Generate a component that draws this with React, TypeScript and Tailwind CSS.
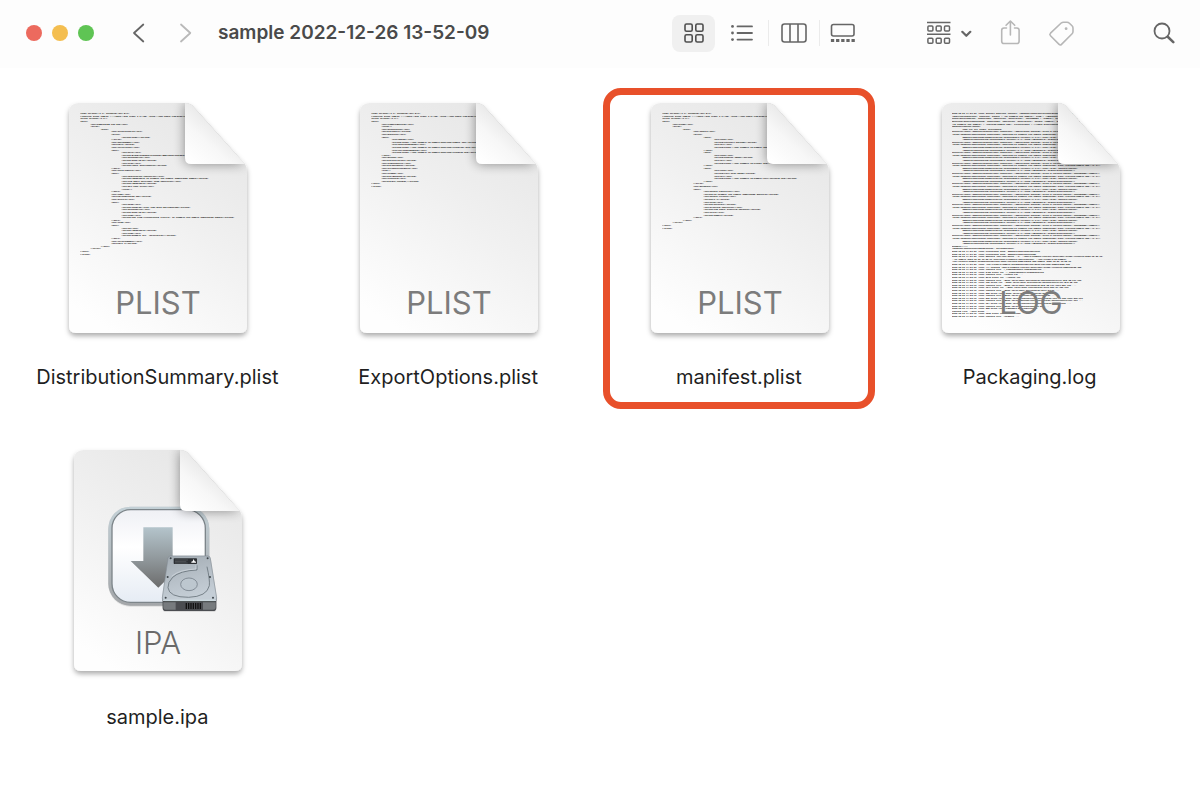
import { useId } from 'react';
import type { ReactNode } from 'react';

type FileItem = {
  name: string;
  kind: string;
  preview?: string;
  highlighted?: boolean;
};

const plistHead = `<?xml version="1.0" encoding="UTF-8"?>
<!DOCTYPE plist PUBLIC "-//Apple//DTD PLIST 1.0//EN" "http://www.apple.com/DTDs/PropertyList-1.0.dtd">
<plist version="1.0">
<dict>`;

const distributionSummary = `${plistHead}
	<key>sample2022.ipa.zip</key>
	<array>
		<dict>
			<key>architectures</key>
			<array>
				<string>arm64</string>
			</array>
			<key>buildNumber</key>
			<string>1</string>
			<key>certificate</key>
			<dict>
				<key>SHA1</key>
				<string>B43C8A0F2D5E6A7190CE12F4B8D79E03A1C6F5D2</string>
				<key>dateExpires</key>
				<string>2023/12/20</string>
				<key>type</key>
				<string>Apple Distribution</string>
			</dict>
			<key>entitlements</key>
			<dict>
				<key>application-identifier</key>
				<string>ABCDE12345.jp.example.ios.sample.sample2022.sample</string>
				<key>com.apple.developer.team-identifier</key>
				<string>ABCDE12345</string>
				<key>get-task-allow</key>
				<false/>
			</dict>
			<key>name</key>
			<string>sample2022.app</string>
			<key>profile</key>
			<dict>
				<key>UUID</key>
				<string>a1b2c3d4-9f61-4a5e-8c3b-d6e7f8091a2b</string>
				<key>dateExpires</key>
				<string>2023/12/20</string>
				<key>name</key>
				<string>iOS Team Provisioning Profile: jp.example.ios.sample.sample2022.sample</string>
			</dict>
			<key>team</key>
			<dict>
				<key>id</key>
				<string>ABCDE12345</string>
				<key>name</key>
				<string>Example Inc. (Enterprise)</string>
			</dict>
			<key>versionNumber</key>
			<string>1.0</string>
		</dict>
	</array>
</dict>
</plist>`;

const exportOptions = `${plistHead}
	<key>compileBitcode</key>
	<false/>
	<key>destination</key>
	<string>export</string>
	<key>manifest</key>
	<dict>
		<key>appURL</key>
		<string>https://www.example.jp/sample/download/sample.ipa</string>
		<key>displayImageURL</key>
		<string>https://www.example.jp/sample/download/icon57x57.png</string>
		<key>fullSizeImageURL</key>
		<string>https://www.example.jp/sample/download/icon512x.png</string>
	</dict>
	<key>method</key>
	<string>enterprise</string>
	<key>signingStyle</key>
	<string>automatic</string>
	<key>stripSwiftSymbols</key>
	<true/>
	<key>teamID</key>
	<string>ABCDE12345</string>
	<key>thinning</key>
	<string>&lt;none&gt;</string>
</dict>
</plist>`;

const manifest = `${plistHead}
	<key>items</key>
	<array>
		<dict>
			<key>assets</key>
			<array>
				<dict>
					<key>kind</key>
					<string>software-package</string>
					<key>url</key>
					<string>https://www.example.jp/sample.ipa</string>
				</dict>
				<dict>
					<key>kind</key>
					<string>display-image</string>
					<key>url</key>
					<string>https://www.example.jp/icon57.png</string>
				</dict>
				<dict>
					<key>kind</key>
					<string>full-size-image</string>
					<key>url</key>
					<string>https://www.example.jp/sample/full/fullsize.png</string>
				</dict>
			</array>
			<key>metadata</key>
			<dict>
				<key>bundle-identifier</key>
				<string>jp.example.ios.sample.sample2022.manifest</string>
				<key>bundle-version</key>
				<string>1.0</string>
				<key>kind</key>
				<string>software</string>
				<key>platform-identifier</key>
				<string>com.apple.platform.iphoneos</string>
				<key>title</key>
				<string>sample</string>
			</dict>
		</dict>
	</array>
</dict>
</plist>`;

const logAsset = `InstallerAsset("IDEDistributionAsset:0x600001a","application-package",scale:2,variant"iphone",customName="sample")
"Item("IDEDistributionItem:0x600003b1",bundleId"jp.example.ios.sample.sample2022",path:"Payload/sample.app",(1.0)),
	IDEDistributionMethodEnterprise:0x600002b840,version="1.0(1)",size="8432",options"0x6000"
	(IDEDistributionItem:0x600002b840,version="1.0",team="ABCDE12345",signed"Distribution")`;

const packagingLog = `2022-12-26 04:51:59 +0000  Initial pipeline context: <IDEDistributionProcessingPipelineContext: 0x7fb>
(IDEArchivedContent: 0x600001, bundle = "jp.example.ios.sample", team = "ABCDE12345", options = {})
Chain(Distribution: 0x600003b1, identifier "Enterprise", customName = "sample", platform: "iphoneos")
Resolved(DistributionItem: 0x600003b1, identifier "Enterprise", bundle "sample", path: "Payload/sample")
"jp.example.ios.sample" = "Payload/sample.app", certificates = ("Apple Distribution: Example Inc.")
IDEDistribution(Steps)
	Task for all items: processing
${Array.from({ length: 11 }, () => logAsset).join('\n')}
Example"("")
<IDEDistributionPackagingContext: 0x7fb63091600>
2022-12-26 04:51:59 +0000  Processing step: IDEDistributionStepCreate
2022-12-26 04:51:59 +0000  Processing step: IDEDistributionPackage
2022-12-26 04:51:59 +0000  Running /usr/bin/ditto '-V' '/Users/example/Library/Developer/Xcode/Archives/2022-12-26 13'
'-xk sample 2022-12-26 13-52-09.xcarchive/Products/Applications' '/var/folders/zz/sample'
/var/folders/sample/XcodeDistPipeline/Root/Payload/sample2022.app/sample 2022-12-26 13-52-09
2022-12-26 04:51:59 +0000  /var/folders/sample/XcodeDistPipeline/Root/Payload/sample2022.app
2022-12-26 04:51:59 +0000  >>> Copying /Users/example/Library/Developer/Xcode/Archives/sample2022.app
2022-12-26 04:52:01 +0000  copying file ./_CodeSignature/CodeResources ...
2022-12-26 04:52:01 +0000  5422 bytes for ./_CodeSignature/CodeResources
2022-12-26 04:52:01 +0000  copying file ./Assets.car ...
2022-12-26 04:52:01 +0000  8942 bytes for ./Assets.car
2022-12-26 04:52:01 +0000  copying file ./Base.lproj/Main.storyboardc/UIViewController-BYZ-38-t0r.nib
2022-12-26 04:52:01 +0000  932 bytes for ./Base.lproj/Main.storyboardc/UIViewController-BYZ-38.nib
2022-12-26 04:52:01 +0000  copying file ./Base.lproj/Main.storyboardc/BYZ-38-t0r-view-8bC.nib ...
2022-12-26 04:52:01 +0000  1247 bytes for ./Base.lproj/Main.storyboardc/Info-8bC-Xf-vdC.nib
2022-12-26 04:52:01 +0000  copying file ./Base.lproj/Main.storyboardc/Info.plist ...
2022-12-26 04:52:01 +0000  258 bytes for ./Base.lproj/Main.storyboardc/Info.plist
2022-12-26 04:52:01 +0000  copying file ./Base.lproj/LaunchScreen.storyboardc ...
2022-12-26 04:52:01 +0000  832 bytes for ./Base.lproj/LaunchScreen.storyboardc/01J-lp-oVM-view-Ze5.nib
2022-12-26 04:52:01 +0000  copying file ./Base.lproj/LaunchScreen.storyboardc/UIViewController-01J ...
2022-12-26 04:52:01 +0000  924 bytes for ./Base.lproj/LaunchScreen.storyboardc/Info.plist ...
2022-12-26 04:52:01 +0000  copying file ./Base.lproj/AppIcon60x60@2x.png ...
2022-12-26 04:52:01 +0000  258 bytes for ./embedded.mobileprovision
copying file ./Info.plist ...
2022-12-26 04:52:01 +0000  1532 bytes for ./Info.plist
2022-12-26 04:52:01 +0000  copying file ./PkgInfo ...`;

const files: FileItem[] = [
  { name: 'DistributionSummary.plist', kind: 'PLIST', preview: distributionSummary },
  { name: 'ExportOptions.plist', kind: 'PLIST', preview: exportOptions },
  { name: 'manifest.plist', kind: 'PLIST', preview: manifest, highlighted: true },
  { name: 'Packaging.log', kind: 'LOG', preview: packagingLog },
  { name: 'sample.ipa', kind: 'IPA' },
];

type PageProps = {
  x: number;
  y: number;
  width: number;
  height: number;
  children: ReactNode;
};

// Sheet of paper with the top right corner folded over its content
function Page({ x, y, width, height, children }: PageProps) {
  const id = useId();
  const right = x + width;
  const bottom = y + height;
  const fx = right - 62;
  const fy = y + 61;
  const sheet = `M${x + 10} ${y}H${fx}q4 0 7 2L${right - 2} ${fy}q2 3 2 7V${bottom - 7}q0 7-7 7H${x + 7}q-7 0-7-7V${y + 10}q0-10 10-10z`;
  const fold = `M${fx} ${y}V${fy - 6}q0 6 6 6H${right - 2}L${fx + 7} ${y + 2}q-3-2-7-2z`;
  return (
    <>
      <defs>
        <linearGradient id={`${id}-sheet`} x1="0.75" y1="0" x2="0.25" y2="1">
          <stop offset="0" stopColor="#e6e6e6" />
          <stop offset="0.45" stopColor="#f0f0f0" />
          <stop offset="0.8" stopColor="#f9f9f9" />
          <stop offset="1" stopColor="#fefefe" />
        </linearGradient>
        <linearGradient id={`${id}-fold`} gradientUnits="userSpaceOnUse" x1={fx + 34} y1={y + 27} x2={fx + 6} y2={fy - 2}>
          <stop offset="0" stopColor="#ebebeb" />
          <stop offset="0.4" stopColor="#f7f7f7" />
          <stop offset="1" stopColor="#ffffff" />
        </linearGradient>
        <clipPath id={`${id}-clip`}>
          <path d={sheet} />
        </clipPath>
        <filter id={`${id}-drop`} x="-10%" y="-10%" width="120%" height="120%">
          <feDropShadow dx="0" dy="3" stdDeviation="2.5" floodOpacity="0.32" />
        </filter>
        <filter id={`${id}-blur`} x="-50%" y="-50%" width="200%" height="200%">
          <feGaussianBlur stdDeviation="6" />
        </filter>
      </defs>
      <path d={sheet} fill={`url(#${id}-sheet)`} filter={`url(#${id}-drop)`} />
      <g clipPath={`url(#${id}-clip)`}>
        {children}
        <path d={fold} fill="#000" opacity="0.42" filter={`url(#${id}-blur)`} />
      </g>
      <path d={fold} fill={`url(#${id}-fold)`} />
    </>
  );
}

function TextPreview({ x, y, text }: { x: number; y: number; text: string }) {
  return (
    <svg x={x} y={y} width="156" height="221" viewBox="0 0 720 1020" aria-hidden="true">
      <g fontFamily="'Liberation Mono', monospace" fontSize="10" fontWeight="700" fill="#000">
        {text.split('\n').map((line, i) => {
          const indent = line.length - line.trimStart().length;
          return (
            <text key={i} x={indent * 48} y={10 + i * 12}>
              {line.trimStart()}
            </text>
          );
        })}
      </g>
    </svg>
  );
}

function KindLabel({ kind, thin }: { kind: string; thin?: boolean }) {
  return (
    <text
      x="111"
      y="219"
      textAnchor="middle"
      fontFamily="Inter, sans-serif"
      fontSize="31"
      fontWeight={thin ? 300 : 400}
      fill={thin ? '#6a6a6a' : '#7c7c7c'}
    >
      {kind}
    </text>
  );
}

function InstallerArt() {
  const id = useId();
  return (
    <g transform="translate(48 60) scale(0.3333)">
      <defs>
        <linearGradient id={`${id}-rim`} x1="0" y1="0" x2="0" y2="1">
          <stop offset="0" stopColor="#c3d0d6" />
          <stop offset="1" stopColor="#a3a6a9" />
        </linearGradient>
        <linearGradient id={`${id}-face`} x1="0" y1="0" x2="0" y2="1">
          <stop offset="0" stopColor="#eff0f5" />
          <stop offset="0.4" stopColor="#ffffff" />
          <stop offset="1" stopColor="#e6ecf4" />
        </linearGradient>
        <linearGradient id={`${id}-arrow`} x1="0" y1="0" x2="0" y2="1">
          <stop offset="0" stopColor="#b4c4cb" />
          <stop offset="0.5" stopColor="#929a9e" />
          <stop offset="1" stopColor="#6c6c6c" />
        </linearGradient>
        <linearGradient id={`${id}-disk`} x1="0" y1="0" x2="0.3" y2="1">
          <stop offset="0" stopColor="#a2abb2" />
          <stop offset="0.6" stopColor="#b8c1c9" />
          <stop offset="1" stopColor="#c5ced6" />
        </linearGradient>
        <filter id={`${id}-soft`}>
          <feDropShadow dx="0" dy="1" stdDeviation="1" floodOpacity="0.3" />
        </filter>
      </defs>
      <rect x="40" y="35" width="303" height="297" rx="66" fill={`url(#${id}-rim)`} filter={`url(#${id}-soft)`} />
      <rect x="51" y="44" width="280" height="278" rx="56" fill={`url(#${id}-face)`} stroke="#7d858a" strokeWidth="4" />
      <path d="M145 97h88v101h38l-81 80-83-80h38z" fill={`url(#${id}-arrow)`} />
      <g filter={`url(#${id}-soft)`}>
        <path d="M203 308h161v30q0 10-10 10H213q-10 0-10-10z" fill="#4b4e51" />
        <path d="M227 183h111q7 0 8 7l19 119q1 8-7 8H210q-9 0-8-8l17-119q1-7 8-7z" fill={`url(#${id}-disk)`} stroke="#8b949b" strokeWidth="2" />
      </g>
      <path d="M205 322h37v22h-29q-8 0-8-8zM324 322h38v14q0 8-8 8h-30z" fill="#777b7e" />
      <path d="M274 324v18M281 324v18M288 324v18M295 324v18M302 324v18M309 324v18M316 324v18" stroke="#111" strokeWidth="4" />
      <path d="M204 316h159" stroke="#dbe8ee" strokeWidth="3" />
      <rect x="236" y="190" width="70" height="17" rx="2" fill="#2d3034" />
      <path d="M240 195h39M240 200h34M240 204h38" stroke="#717579" strokeWidth="1.5" />
      <path d="M289 203h14v-3l-4-1-3-7-3 7-4 1z" fill="#fff" />
      <path
        d="M306 211v14q-51 2-73 22-15 15-14 31 3 29 62 29 55-2 62-35 2-18-7-57"
        fill="none"
        stroke="#68727a"
        strokeWidth="2.500"
      />
      <path d="M303 211v11q-51 2-73 22" fill="none" stroke="#d6dde2" strokeWidth="2" />
      <ellipse cx="282" cy="268" rx="25" ry="19" fill="#bdc7cf" stroke="#77818a" strokeWidth="2.500" />
      <g fill="#3d4449">
        <circle cx="227" cy="190" r="3" />
        <circle cx="338" cy="190" r="3" />
        <circle cx="218" cy="246" r="3" />
        <circle cx="345" cy="246" r="3" />
        <circle cx="212" cy="308" r="3" />
        <circle cx="354" cy="308" r="3" />
      </g>
    </g>
  );
}

function FileIcon({ file }: { file: FileItem }) {
  return (
    <svg width="220" height="252" viewBox="0 0 220 252" className="shrink-0">
      {file.preview ? (
        <Page x={22} y={8} width={178} height={230}>
          <TextPreview x={file.kind === 'LOG' ? 32 : 33} y={17} text={file.preview} />
          <KindLabel kind={file.kind} />
        </Page>
      ) : (
        <Page x={27} y={15} width={168} height={221}>
          <InstallerArt />
          <KindLabel kind={file.kind} thin />
        </Page>
      )}
    </svg>
  );
}

function Toolbar() {
  return (
    <header className="flex h-17 items-center bg-[#fdfdfd] pr-[25px] pb-[2px] pl-[26px] text-[#666]">
      <div className="flex gap-[10px]">
        <button type="button" aria-label="Close" className="size-4 rounded-full bg-[#ec6a5e]" />
        <button type="button" aria-label="Minimize" className="size-4 rounded-full bg-[#f4be50]" />
        <button type="button" aria-label="Zoom" className="size-4 rounded-full bg-[#5fc454]" />
      </div>
      <div className="ml-9 flex gap-6">
        <button type="button" aria-label="Back">
          <svg width="22" height="22" viewBox="0 0 22 22" fill="none" stroke="currentColor" strokeWidth="1.8" strokeLinecap="round" strokeLinejoin="round">
            <path d="M13.300 2.500 4 11l9.300 8.500" />
          </svg>
        </button>
        <button type="button" aria-label="Forward" className="text-[#b9b9b9]">
          <svg width="22" height="22" viewBox="0 0 22 22" fill="none" stroke="currentColor" strokeWidth="1.8" strokeLinecap="round" strokeLinejoin="round">
            <path d="M5 2.500 14.300 11 5 19.500" />
          </svg>
        </button>
      </div>
      <h1 className="ml-5 text-[19px] font-semibold whitespace-nowrap text-[#4a4a4a]">sample 2022-12-26 13-52-09</h1>

      <div className="mr-[60px] ml-auto flex items-center">
        <button type="button" aria-label="Icon view" aria-pressed="true" className="flex h-[37px] w-[43px] items-center justify-center rounded-lg bg-[#f0f0f0] text-[#4f4f4f]">
          <svg width="20" height="20" viewBox="0 0 20 20" fill="none" stroke="currentColor" strokeWidth="1.6">
            <rect x="1" y="1" width="7.200" height="7.200" rx="1.500" />
            <rect x="11.800" y="1" width="7.200" height="7.200" rx="1.500" />
            <rect x="1" y="11.800" width="7.200" height="7.200" rx="1.500" />
            <rect x="11.800" y="11.800" width="7.200" height="7.200" rx="1.500" />
          </svg>
        </button>
        <button type="button" aria-label="List view" className="flex h-[37px] w-[53px] items-center justify-center">
          <svg width="24" height="20" viewBox="0 0 24 20" fill="none" stroke="currentColor" strokeWidth="1.8" strokeLinecap="round">
            <path d="M7.500 3.400H22M7.500 10H22M7.500 16.600H22" />
            <g fill="currentColor" stroke="none">
              <circle cx="2.500" cy="3.400" r="1.400" />
              <circle cx="2.500" cy="10" r="1.400" />
              <circle cx="2.500" cy="16.600" r="1.400" />
            </g>
          </svg>
        </button>
        <span className="h-[26px] w-px bg-[#ebebeb]" />
        <button type="button" aria-label="Column view" className="flex h-[37px] w-[50px] items-center justify-center">
          <svg width="26" height="20" viewBox="0 0 26 20" fill="none" stroke="currentColor" strokeWidth="1.6">
            <rect x="1" y="1" width="24" height="18" rx="2.500" />
            <path d="M9 1v18M17 1v18" />
          </svg>
        </button>
        <span className="h-[26px] w-px bg-[#ebebeb]" />
        <button type="button" aria-label="Gallery view" className="flex h-[37px] w-[46px] items-center justify-center">
          <svg width="26" height="20" viewBox="0 0 26 20" fill="none" stroke="currentColor" strokeWidth="1.6">
            <rect x="1.500" y="1.500" width="22.500" height="11.500" rx="2" />
            <path d="M.9 17.500h24" strokeWidth="3.200" strokeDasharray="3.300 1.850" />
          </svg>
        </button>
      </div>

      <button type="button" aria-label="Group items" className="mr-[27px] flex items-center justify-between gap-2">
        <svg width="26" height="24" viewBox="0 0 26 24" fill="none" stroke="currentColor" strokeWidth="1.5">
          <path d="M1 1.500h23.500M1 13.300h23.500" />
          <rect x="1.900" y="5.100" width="5" height="5" rx="1" />
          <rect x="10.200" y="5.100" width="5" height="5" rx="1" />
          <rect x="18.500" y="5.100" width="5" height="5" rx="1" />
          <rect x="1.900" y="17.200" width="5" height="5" rx="1" />
          <rect x="10.200" y="17.200" width="5" height="5" rx="1" />
          <rect x="18.500" y="17.200" width="5" height="5" rx="1" />
        </svg>
        <svg width="12" height="8" viewBox="0 0 12 8" fill="none" stroke="currentColor" strokeWidth="2.200" strokeLinecap="round" strokeLinejoin="round">
          <path d="m2.300 2.800 4 4 4-4" />
        </svg>
      </button>
      <button type="button" aria-label="Share" className="mr-[27px] text-[#b7b7b7]">
        <svg width="22" height="28" viewBox="0 0 22 28" fill="none" stroke="currentColor" strokeWidth="1.600" strokeLinecap="round" strokeLinejoin="round">
          <path d="M7.500 9H5Q2.700 9 2.700 11.300v10.900q0 2.300 2.300 2.300h12.800q2.300 0 2.300-2.300V11.300Q20.100 9 17.800 9H15.500M11.400 16V2M7.100 6.300 11.400 2l4.300 4.300" />
        </svg>
      </button>
      <button type="button" aria-label="Tags" className="mr-[79px] text-[#b7b7b7]">
        <svg width="26" height="26" viewBox="0 0 26 26" fill="none" stroke="currentColor" strokeWidth="1.600" strokeLinejoin="round">
          <path d="M2.500 13.200 13.200 3q1-.8 2.200-.8H19q1.400 0 2.400 1L24 5.800q1 1 1 2.400v3.300q0 1.300-.9 2.200L13.500 24.400q-1.200 1.200-2.400 0l-8.600-8.600q-1.300-1.300 0-2.600z" />
          <circle cx="18.100" cy="8.700" r="1.400" fill="currentColor" stroke="none" />
        </svg>
      </button>
      <button type="button" aria-label="Search">
        <svg width="22" height="22" viewBox="0 0 22 22" fill="none" stroke="currentColor" strokeLinecap="round">
          <circle cx="9" cy="9" r="7.500" strokeWidth="1.800" />
          <path d="m15 15 5.300 5.200" strokeWidth="2.500" />
        </svg>
      </button>
    </header>
  );
}

export default function App() {
  return (
    <div className="min-h-screen bg-white font-[Inter,'Liberation_Sans',sans-serif]">
      <Toolbar />
      <main className="pt-5 pr-[25px] pb-8 pl-3">
        <ul className="grid grid-cols-4 gap-y-[19px]">
          {files.map((file) => (
            <li
              key={file.name}
              className={`mx-[9px] flex flex-col items-center rounded-[18px] border-[7px] pb-[11px] ${
                file.highlighted ? 'border-[#e8502a]' : 'border-transparent'
              }`}
            >
              <FileIcon file={file} />
              <span className="mt-4 text-[20px] leading-7 whitespace-nowrap text-[#1f1f1f]">{file.name}</span>
            </li>
          ))}
        </ul>
      </main>
    </div>
  );
}
